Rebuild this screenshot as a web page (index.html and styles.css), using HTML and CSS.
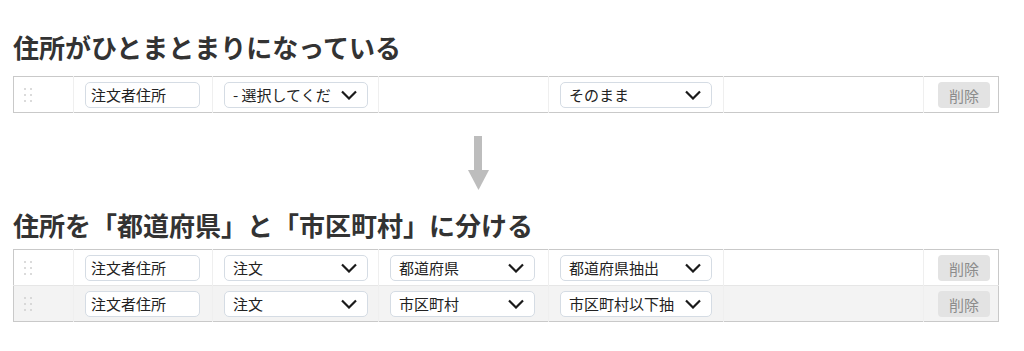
FILE: index.html
```html
<!DOCTYPE html>
<html lang="ja">
<head>
    <meta charset="UTF-8">
    <title>住所の分割</title>
    <link rel="stylesheet" href="styles.css">
</head>
<body>

    <h2 class="title first">住所がひとまとまりになっている</h2>
    <table class="fields">
        <colgroup>
            <col class="c-handle"><col class="c-name"><col class="c-src"><col class="c-dst"><col class="c-conv"><col class="c-blank"><col class="c-del">
        </colgroup>
        <tr>
            <td class="handle"><svg width="8" height="14" viewBox="0 0 8 14"><circle cx="1" cy="1" r="1"/><circle cx="7" cy="1" r="1"/><circle cx="1" cy="7" r="1"/><circle cx="7" cy="7" r="1"/><circle cx="1" cy="13" r="1"/><circle cx="7" cy="13" r="1"/></svg></td>
            <td><div class="input">注文者住所</div></td>
            <td><div class="select w144"><span class="val">- 選択してくだ</span><svg class="chev" width="16" height="10" viewBox="0 0 16 10"><polyline points="1,1.5 8,8.5 15,1.5"/></svg></div></td>
            <td></td>
            <td><div class="select w152"><span class="val">そのまま</span><svg class="chev" width="16" height="10" viewBox="0 0 16 10"><polyline points="1,1.5 8,8.5 15,1.5"/></svg></div></td>
            <td></td>
            <td class="del"><button class="btn">削除</button></td>
        </tr>
    </table>

    <div class="arrow">
        <svg width="21" height="54" viewBox="0 0 21 54"><rect x="6" y="0" width="8" height="35"/><polygon points="0,34 21,34 10.5,54"/></svg>
    </div>

    <h2 class="title">住所を「都道府県」と「市区町村」に分ける</h2>
    <table class="fields">
        <colgroup>
            <col class="c-handle"><col class="c-name"><col class="c-src"><col class="c-dst"><col class="c-conv"><col class="c-blank"><col class="c-del">
        </colgroup>
        <tr>
            <td class="handle"><svg width="8" height="14" viewBox="0 0 8 14"><circle cx="1" cy="1" r="1"/><circle cx="7" cy="1" r="1"/><circle cx="1" cy="7" r="1"/><circle cx="7" cy="7" r="1"/><circle cx="1" cy="13" r="1"/><circle cx="7" cy="13" r="1"/></svg></td>
            <td><div class="input">注文者住所</div></td>
            <td><div class="select w144"><span class="val">注文</span><svg class="chev" width="16" height="10" viewBox="0 0 16 10"><polyline points="1,1.5 8,8.5 15,1.5"/></svg></div></td>
            <td><div class="select w145"><span class="val">都道府県</span><svg class="chev" width="16" height="10" viewBox="0 0 16 10"><polyline points="1,1.5 8,8.5 15,1.5"/></svg></div></td>
            <td><div class="select w152"><span class="val">都道府県抽出</span><svg class="chev" width="16" height="10" viewBox="0 0 16 10"><polyline points="1,1.5 8,8.5 15,1.5"/></svg></div></td>
            <td></td>
            <td class="del"><button class="btn">削除</button></td>
        </tr>
        <tr class="alt">
            <td class="handle"><svg width="8" height="14" viewBox="0 0 8 14"><circle cx="1" cy="1" r="1"/><circle cx="7" cy="1" r="1"/><circle cx="1" cy="7" r="1"/><circle cx="7" cy="7" r="1"/><circle cx="1" cy="13" r="1"/><circle cx="7" cy="13" r="1"/></svg></td>
            <td><div class="input">注文者住所</div></td>
            <td><div class="select w144"><span class="val">注文</span><svg class="chev" width="16" height="10" viewBox="0 0 16 10"><polyline points="1,1.5 8,8.5 15,1.5"/></svg></div></td>
            <td><div class="select w145"><span class="val">市区町村</span><svg class="chev" width="16" height="10" viewBox="0 0 16 10"><polyline points="1,1.5 8,8.5 15,1.5"/></svg></div></td>
            <td><div class="select w152"><span class="val">市区町村以下抽</span><svg class="chev" width="16" height="10" viewBox="0 0 16 10"><polyline points="1,1.5 8,8.5 15,1.5"/></svg></div></td>
            <td></td>
            <td class="del"><button class="btn">削除</button></td>
        </tr>
    </table>

</body>
</html>
```

FILE: styles.css
```css
*{
    margin: 0;
    padding: 0;
    box-sizing: border-box;
}
body{
    padding: 0 13px;
    background-color: #fff;
    font-family: "Noto Sans CJK JP", "Noto Sans", sans-serif;
    color: #333;
}
.title{
    margin-top: 17px;
    font-size: 26px;
    line-height: 36px;
    font-weight: bold;
    color: #333;
}
.title.first{
    margin-top: 29px;
    margin-bottom: 11px;
}
.title + .fields{
    margin-top: 6px;
}
.title.first + .fields{
    margin-top: 0;
}
.fields{
    width: 985px;
    table-layout: fixed;
    border-collapse: collapse;
    border: 1px solid #c9c9c9;
}
.c-handle{ width: 60px; }
.c-name{ width: 139px; }
.c-src{ width: 166px; }
.c-dst{ width: 170px; }
.c-conv{ width: 175px; }
.c-blank{ width: 200px; }
.c-del{ width: 75px; }
.fields tr{
    height: 35px;
}
.fields tr + tr{
    border-top: 1px solid #e6e6e6;
}
.fields .alt{
    background-color: #f3f3f3;
}
.fields td{
    padding: 5px 11px 4px;
    border-left: 1px solid #efefef;
    vertical-align: middle;
}
.fields td:first-child{
    border-left: 0;
}
.handle{
    padding-left: 10px !important;
}
.handle svg{
    display: block;
    fill: #cfcfcf;
}
.input, .select{
    height: 26px;
    border: 1px solid #d5dce4;
    border-radius: 5px;
    background-color: #fff;
    font-size: 15px;
    line-height: 24px;
    color: #222;
    white-space: nowrap;
    overflow: hidden;
}
.input{
    width: 115px;
    padding-left: 5px;
}
.select{
    display: flex;
    align-items: center;
    padding: 0 10px 0 8px;
}
.w144{ width: 144px; }
.w145{ width: 145px; }
.w152{ width: 152px; }
.val{
    flex: 1;
    margin-right: 6px;
}
.chev{
    flex: none;
    fill: none;
    stroke: #1a1a1a;
    stroke-width: 2.2;
}
.del{
    text-align: right;
    padding-right: 8px !important;
}
.btn{
    width: 52px;
    height: 26px;
    border: 0;
    border-radius: 4px;
    background-color: #e3e3e3;
    font-family: "Noto Sans CJK JP", sans-serif;
    font-size: 15px;
    color: #8c8c8c;
}
.arrow{
    margin: 23px 0 0 455px;
    height: 54px;
}
.arrow svg{
    display: block;
    fill: #bdbdbd;
}
```
